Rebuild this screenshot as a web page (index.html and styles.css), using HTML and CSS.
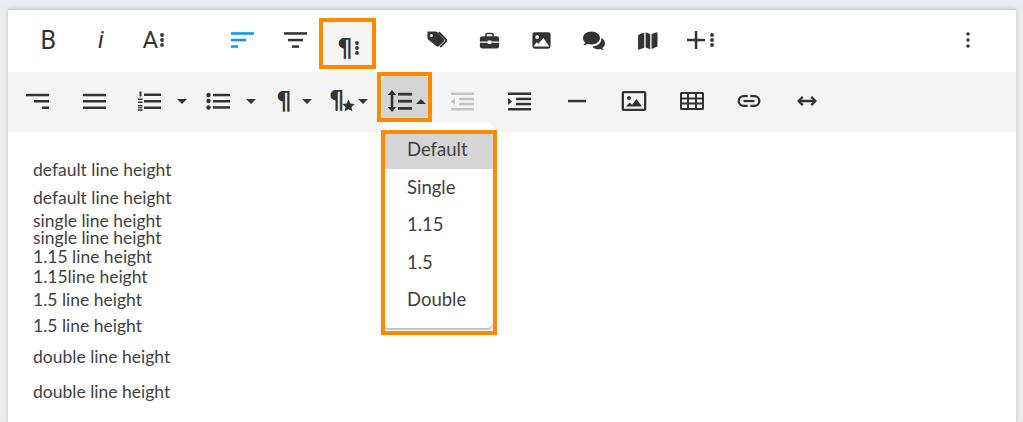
FILE: index.html
```html
<!DOCTYPE html>
<html lang="en">
<head>
<meta charset="utf-8">
<title>Line height</title>
<link rel="stylesheet" href="styles.css">
</head>
<body>
<div class="editor">
  <div class="row row-top">
    <button class="btn glyph"><span class="t-b">B</span></button>
    <button class="btn glyph"><span class="t-i">i</span></button>
    <button class="btn glyph"><span class="t-a">A</span><svg class="dots" viewBox="0 0 4 14"><circle cx="2" cy="2" r="1.9"/><circle cx="2" cy="7" r="1.9"/><circle cx="2" cy="12" r="1.9"/></svg></button>
    <button class="btn group-start"><svg class="ic blue" viewBox="0 0 24 24"><rect x="0" y="4.200" width="23" height="2.500"/><rect x="0" y="10.800" width="15" height="2.500"/><rect x="0" y="17.300" width="7" height="2.500"/></svg></button>
    <button class="btn"><svg class="ic" viewBox="0 0 24 24"><rect x="0" y="4.200" width="23" height="2.500"/><rect x="4" y="10.800" width="15" height="2.500"/><rect x="8" y="17.300" width="7" height="2.500"/></svg></button>
    <button class="btn glyph para-more"><span class="t-p">¶</span><svg class="dots" viewBox="0 0 4 14"><circle cx="2" cy="2" r="1.9"/><circle cx="2" cy="7" r="1.9"/><circle cx="2" cy="12" r="1.9"/></svg></button>
    <button class="btn group-end"><svg class="ic" viewBox="0 0 24 24"><path d="M2.500 3.500h8.200a2 2 0 0 1 1.400.6l6.600 6.600a2 2 0 0 1 0 2.800l-4.600 4.600a2 2 0 0 1-2.800 0L3.100 11.500a2 2 0 0 1-.6-1.400zM6.500 6a1.500 1.500 0 1 0 0 3 1.500 1.500 0 0 0 0-3z" fill-rule="evenodd"/><path d="M14.500 3.500l7 7.300a2.300 2.300 0 0 1 0 3.200l-5.600 5.800-1.300-1.200 5.400-5.700a.6.6 0 0 0 0-.8l-7-7.200z"/></svg></button>
    <button class="btn"><svg class="ic-20" viewBox="0 0 24 24"><path d="M9.500 3h5A2.500 2.500 0 0 1 17 5.500V7h3a3 3 0 0 1 3 3v3H14v-1h-4v1H1v-3a3 3 0 0 1 3-3h3V5.500A2.500 2.500 0 0 1 9.500 3zm0 1.800a.8.800 0 0 0-.8.800V7h6.600V5.600a.8.800 0 0 0-.8-.8zM1 14.500h9V16h4v-1.500h9V18a3 3 0 0 1-3 3H4a3 3 0 0 1-3-3z" fill-rule="evenodd"/></svg></button>
    <button class="btn"><svg class="ic-23" viewBox="0 0 24 24"><path d="M5 3.500h14A2.500 2.500 0 0 1 21.500 6v12a2.500 2.500 0 0 1-2.500 2.500H5A2.500 2.500 0 0 1 2.500 18V6A2.500 2.500 0 0 1 5 3.500zM7.500 6.500a2 2 0 1 0 0 4 2 2 0 0 0 0-4zM14 9.500L8.800 15.500l-2-1.800L3.800 18.300h16.400z" fill-rule="evenodd"/></svg></button>
    <button class="btn"><svg class="ic" viewBox="0 0 24 24"><path d="M9.500 3.500C4.800 3.500 1 6.300 1 10c0 1.700.8 3.200 2.100 4.400-.3 1-1 2-2 2.600 1.800 0 3.300-.5 4.500-1.300 1.200.5 2.500.8 3.900.8 4.700 0 8.500-2.900 8.500-6.500s-3.800-6.500-8.500-6.500z"/><path d="M19.200 9.800c.1.400.1.800.1 1.200 0 4.300-4.100 7.300-9 7.500 1.100 1.700 3.300 2.800 5.700 2.800.8 0 1.600-.1 2.300-.3.800.6 1.900 1 3.200 1-.7-.6-1.100-1.300-1.300-2 1.700-1 2.800-2.600 2.800-4.500 0-2.500-1.700-4.600-3.800-5.700z"/></svg></button>
    <button class="btn"><svg class="ic-22" viewBox="0 0 24 24"><path d="M9 3.800v16.700l-5.300 1.900a1 1 0 0 1-1.400-.9V7.300a1 1 0 0 1 .7-1zM10.500 3.600l5 1.900V22l-5-1.800zM17 5.500l5.300-1.900a1 1 0 0 1 1.200 1v13.700a1 1 0 0 1-.7 1L17 21.800z"/></svg></button>
    <button class="btn glyph plus-more"><svg class="plus" viewBox="0 0 18 18"><rect x="0" y="7.800" width="18" height="2.500"/><rect x="7.800" y="0" width="2.500" height="18"/></svg><svg class="dots" viewBox="0 0 4 14"><circle cx="2" cy="2" r="1.9"/><circle cx="2" cy="7" r="1.9"/><circle cx="2" cy="12" r="1.9"/></svg></button>
    <button class="btn more"><svg class="dots-lg" viewBox="0 0 4 16"><circle cx="2" cy="2" r="1.800"/><circle cx="2" cy="8" r="1.800"/><circle cx="2" cy="14" r="1.800"/></svg></button>
  </div>
  <div class="row row-sub">
    <button class="sub w56"><svg class="ic" viewBox="0 0 24 24"><rect x="1" y="4.800" width="23" height="2.500"/><rect x="9" y="11" width="15" height="2.500"/><rect x="17" y="17.500" width="7" height="2.500"/></svg></button>
    <button class="sub w58"><svg class="ic" viewBox="0 0 24 24"><rect x="1" y="4.800" width="23" height="2.500"/><rect x="1" y="11" width="23" height="2.500"/><rect x="1" y="17.500" width="23" height="2.500"/></svg></button>
    <button class="sub dd dd-ol"><svg class="ic" viewBox="0 0 24 24"><rect x="7" y="4.500" width="17" height="2.500"/><rect x="7" y="11" width="17" height="2.500"/><rect x="7" y="17.500" width="17" height="2.500"/><rect x="2.500" y="2.500" width="2" height="5"/><rect x="1" y="9.500" width="4.500" height="1.500"/><rect x="1" y="12.500" width="4.500" height="1.500"/><rect x="1" y="16" width="4.500" height="1.400"/><rect x="1" y="18.200" width="4.500" height="1.200"/><rect x="1" y="20.300" width="4.500" height="1.500"/></svg><span class="caret"></span></button>
    <button class="sub dd dd-ul"><svg class="ic" viewBox="0 0 24 24"><rect x="7" y="4.800" width="17" height="2.500"/><rect x="7" y="11" width="17" height="2.500"/><rect x="7" y="17.200" width="17" height="2.500"/><circle cx="2.500" cy="6" r="2.200"/><circle cx="2.500" cy="12" r="2.200"/><circle cx="2.500" cy="18.500" r="2.200"/></svg><span class="caret"></span></button>
    <button class="sub dd dd-p"><span class="t-p box">¶</span><span class="caret"></span></button>
    <button class="sub dd dd-ps"><span class="ps"><span class="t-p">¶</span><svg class="star" viewBox="0 0 24 24"><path d="M12 1l3.400 7.400 8.100.9-6 5.500 1.600 8L12 18.800 4.900 22.800l1.600-8-6-5.500 8.100-.9z"/></svg></span><span class="caret"></span></button>
    <button class="sub dd dd-lh"><svg class="ic" viewBox="0 0 24 24"><rect x="10" y="3.800" width="14" height="2.800"/><rect x="10" y="10.800" width="14" height="2.800"/><rect x="10" y="18" width="14" height="2.800"/><path d="M4 1l4.200 5H5.300V18h2.900L4 23 -.2 18h2.900V6H-.2z"/></svg><span class="caret up"></span></button>
    <button class="sub w52"><svg class="ic off" viewBox="0 0 24 24"><rect x="1" y="3.500" width="23" height="2.500"/><rect x="9" y="8.700" width="15" height="2.500"/><rect x="9" y="13.800" width="15" height="2.500"/><rect x="1" y="19" width="23" height="2.500"/><path d="M5 9v7l-4-3.500z"/></svg></button>
    <button class="sub w62"><svg class="ic" viewBox="0 0 24 24"><rect x="1" y="3.500" width="23" height="2.500"/><rect x="9" y="8.700" width="15" height="2.500"/><rect x="9" y="13.800" width="15" height="2.500"/><rect x="1" y="19" width="23" height="2.500"/><path d="M1 9v7l4-3.500z"/></svg></button>
    <button class="sub w54"><svg class="ic" viewBox="0 0 24 24"><rect x="3" y="10.800" width="18" height="2.500"/></svg></button>
    <button class="sub w60"><svg class="ic-wide" viewBox="0 0 26 22"><path d="M2.500 1h21A1.800 1.800 0 0 1 25.300 2.800v16.400a1.800 1.800 0 0 1-1.800 1.800h-21A1.800 1.800 0 0 1 .7 19.200V2.800A1.800 1.800 0 0 1 2.500 1zM3 3.300v15.400h20V3.300zM8 6a2 2 0 1 1 0 4 2 2 0 0 1 0-4zM15.500 9l5.500 7.500H5l3.500-4 2.500 2.200z" fill-rule="evenodd"/></svg></button>
    <button class="sub w56"><svg class="ic-wide" viewBox="0 0 26 22"><path d="M2.500 2h21A1.500 1.500 0 0 1 25 3.500v15a1.500 1.500 0 0 1-1.500 1.500h-21A1.500 1.500 0 0 1 1 18.500v-15A1.500 1.500 0 0 1 2.500 2zM3 4v3.500h5V4zm7 0v3.500h6V4zm8 0v3.500h5V4zM3 9.500V12.500h5V9.500zm7 0V12.500h6V9.500zm8 0V12.500h5V9.500zM3 14.500V18h5v-3.500zm7 0V18h6v-3.500zm8 0V18h5v-3.500z" fill-rule="evenodd"/></svg></button>
    <button class="sub w58"><svg class="ic-wide" viewBox="0 0 26 24"><path d="M11.500 5.500H7a6.500 6.500 0 0 0 0 13h4.500v-2.500H7a4 4 0 0 1 0-8h4.500zM14.500 5.500H19a6.500 6.500 0 0 1 0 13h-4.500v-2.500H19a4 4 0 0 0 0-8h-4.500z"/><rect x="7" y="10.800" width="12" height="2.500"/></svg></button>
    <button class="sub w58"><svg class="ic" viewBox="0 0 24 24"><path d="M7 7l1.700 1.700L6.200 10.800h11.600l-2.500-2.100L17 7l5 5-5 5-1.700-1.700 2.500-2.100H6.200l2.500 2.100L7 17l-5-5z"/></svg></button>
  </div>
  <div class="content">
    <p class="lh-default">default line height</p>
    <p class="lh-default">default line height</p>
    <p class="lh-single">single line height</p>
    <p class="lh-single">single line height</p>
    <p class="lh-115">1.15 line height</p>
    <p class="lh-115">1.15line height</p>
    <p class="lh-15">1.5 line height</p>
    <p class="lh-15">1.5 line height</p>
    <p class="lh-double">double line height</p>
    <p class="lh-double">double line height</p>
  </div>
  <ul class="menu">
    <li class="menu-item selected">Default</li>
    <li class="menu-item">Single</li>
    <li class="menu-item">1.15</li>
    <li class="menu-item">1.5</li>
    <li class="menu-item">Double</li>
  </ul>
  <div class="mark mark-para"></div>
  <div class="mark mark-lh"></div>
  <div class="mark mark-menu"></div>
</div>
</body>
</html>
```

FILE: styles.css
```css
* { box-sizing: border-box; }
html, body { height: 100%; }
body {
  margin: 0;
  padding: 9px 7px 0 8px;
  background: #e9eef2;
  overflow: hidden;
  font-family: "Lato", sans-serif;
  color: #414141;
}
.editor {
  position: relative;
  height: 413px;
  background: #fff;
  border-top: 1px solid #c8c8c8;
  box-shadow: 0 0 5px rgba(0, 0, 0, .18);
}
.row { display: flex; align-items: flex-start; }
.row-top { height: 62px; padding-left: 14px; }
.row-sub { height: 60px; background: #f4f4f4; padding-left: 1px; }
button {
  border: 0;
  padding: 0;
  margin: 0;
  background: none;
  color: #333;
  font: inherit;
  display: flex;
  align-items: center;
  justify-content: center;
}
svg { fill: #333; display: block; flex: none; }
.btn { width: 52.5px; height: 60px; flex: none; }
.group-start { margin-left: 37.500px; }
.group-end { margin-left: 36px; }
.plus-more { margin-left: 1.500px; }
.more { margin-left: auto; margin-right: 22px; }
.ic { width: 24px; height: 24px; }
.ic-23 { width: 23px; height: 23px; }
.ic-22 { width: 22px; height: 22px; }
.ic-20 { width: 21px; height: 21px; }
.ic-wide { width: 26px; height: 22px; }
.blue { fill: #0098f7; }
.off { fill: #c4c4c4; }
.plus { width: 18px; height: 18px; margin-right: 3px; }
.dots { width: 4px; height: 14px; margin-left: 2px; }
.dots-lg { width: 4px; height: 16px; }
.t-b { font: 400 25px/1 "Roboto", sans-serif; }
.t-i { font: italic 400 24px/1 "Roboto", sans-serif; }
.t-a { font: 400 24px/1 "Roboto", sans-serif; }
.t-p { font: 700 24px/1 "DejaVu Sans", sans-serif; }
.para-more {
  width: 48px;
  height: 50px;
  margin: 12px 2.500px 0 2px;
  background: #f4f4f4;
  padding-top: 2px;
}
.sub { height: 58px; flex: none; }
.w52 { width: 52px; }
.w54 { width: 54px; }
.w56 { width: 56px; }
.w58 { width: 58px; }
.w60 { width: 60px; }
.w62 { width: 62px; }
.dd { justify-content: flex-start; }
.dd-ol { width: 73px; padding-left: 14px; gap: 16px; }
.dd-ul { width: 68px; padding-left: 10px; gap: 16px; }
.dd-p { width: 58px; padding-left: 8px; gap: 6px; }
.dd-ps { width: 58px; padding-left: 9px; gap: 3px; }
.dd-lh {
  width: 46px;
  height: 46px;
  margin: 4px 8px 0 2px;
  padding: 4px 0 0 6px;
  gap: 4px;
  background: #d5d5d5;
  border-radius: 4px 4px 0 0;
}
.box { width: 24px; text-align: center; }
.ps { position: relative; width: 24px; height: 26px; display: block; }
.ps .t-p { position: absolute; left: -2px; top: 0; }
.star { position: absolute; left: 11px; top: 11px; width: 13px; height: 13px; }
.caret {
  width: 0;
  height: 0;
  border-left: 5px solid transparent;
  border-right: 5px solid transparent;
  border-top: 5px solid #333;
  flex: none;
}
.caret.up { border-top: 0; border-bottom: 5px solid #333; }
.content { padding-top: 24px; padding-left: 25px; font-size: 17.500px; }
.content p { margin: 0; }
.lh-default { line-height: 28px; }
.lh-single { line-height: 17px; }
.lh-single + .lh-115 { margin-top: 1px; }
.lh-115 { line-height: 20px; }
.lh-15 { line-height: 26px; }
.lh-double { line-height: 35px; }
.menu {
  position: absolute;
  left: 374px;
  top: 112px;
  width: 111px;
  height: 208px;
  margin: 0;
  padding: 9px 0 0 3px;
  list-style: none;
  background: #fff;
  border-radius: 6px;
  box-shadow: inset 0 -2px 0 #c4c4c4;
}
.menu-item {
  height: 37.500px;
  line-height: 37.500px;
  padding-left: 22px;
  font-size: 18.500px;
  color: #414141;
}
.selected { background: #d5d5d5; }
.mark { position: absolute; border: 4.500px solid #ff8a00; }
.mark-para { left: 311px; top: 8px; width: 57px; height: 51px; }
.mark-lh { left: 369px; top: 62px; width: 55px; height: 50px; }
.mark-menu { left: 373px; top: 120px; width: 116px; height: 205px; }
```
